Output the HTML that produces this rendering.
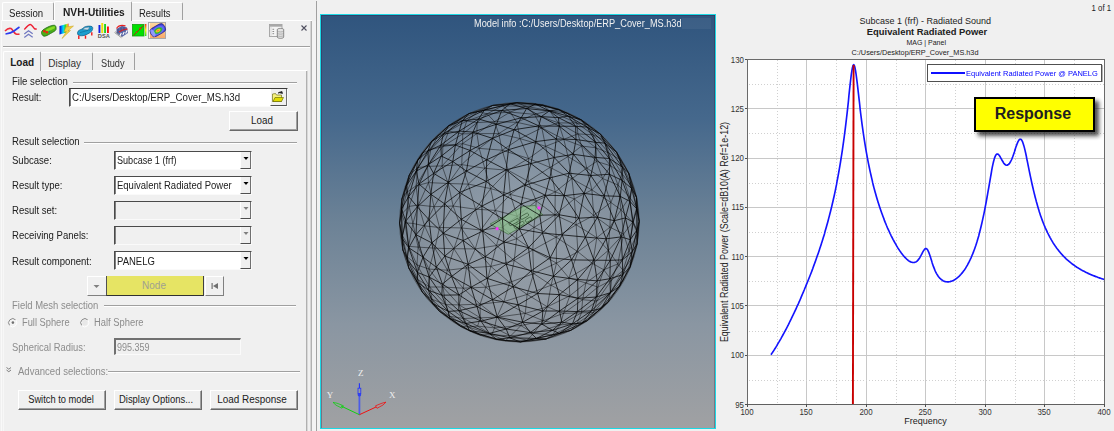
<!DOCTYPE html>
<html><head><meta charset="utf-8"><style>
html,body{margin:0;padding:0;}
body{width:1114px;height:431px;overflow:hidden;background:#f0f0f0;position:relative;font-family:"Liberation Sans", sans-serif;}
.t{position:absolute;white-space:nowrap;line-height:1;font-family:"Liberation Sans", sans-serif;}
.r{position:absolute;}
</style></head><body>
<div class="r" style="left:2px;top:2px;width:52px;height:19px;border-left:1px solid #fff;border-top:1px solid #fff;border-right:1px solid #a0a0a0;box-sizing:border-box;border-top-left-radius:2px;border-top-right-radius:2px;"></div>
<div class="r" style="left:54px;top:1px;width:78px;height:20px;border-left:1px solid #fff;border-top:1px solid #fff;border-right:1px solid #a0a0a0;box-sizing:border-box;background:#f0f0f0;border-top-left-radius:2px;border-top-right-radius:2px;"></div>
<div class="r" style="left:132px;top:2px;width:51px;height:19px;border-top:1px solid #fff;border-right:1px solid #a0a0a0;box-sizing:border-box;border-top-right-radius:2px;"></div>
<div class="t" style="left:9px;top:8.84px;font-size:10px;font-weight:normal;color:#202020;transform:scaleX(0.96);transform-origin:0 0;">Session</div>
<div class="t" style="left:62.6px;top:7.73px;font-size:10px;font-weight:bold;color:#202020;transform:scaleX(1.02);transform-origin:0 0;">NVH-Utilities</div>
<div class="t" style="left:139px;top:9.04px;font-size:10px;font-weight:normal;color:#202020;transform:scaleX(0.944);transform-origin:0 0;">Results</div>
<div class="r" style="left:2px;top:20px;width:52px;height:1px;background:#fff"></div>
<div class="r" style="left:132px;top:20px;width:180px;height:1px;background:#fff"></div>
<div class="r" style="left:1px;top:20px;width:1px;height:411px;background:#f9f9f9"></div>
<div class="r" style="left:310px;top:21px;width:1px;height:410px;background:#d4d4d4"></div>
<div class="r" style="left:311px;top:21px;width:1px;height:410px;background:#b0b0b0"></div>
<div class="r" style="left:312px;top:21px;width:4px;height:410px;background:#f3f3f3"></div>
<div class="r" style="left:316px;top:1px;width:1px;height:430px;background:#a0a0a0"></div>
<div class="r" style="left:317px;top:0px;width:3px;height:431px;background:#f1f1f1"></div>

<svg class="r" style="left:0;top:18px" width="170" height="26" viewBox="0 18 170 26">
 <!-- icon1 -->
 <path d="M5 31 C7 29 9 27.8 11 28.6 C13 29.5 13.5 33 16 34 C17.5 34.6 18.5 34.3 19.5 34" fill="none" stroke="#ee2a3a" stroke-width="1.6"/>
 <path d="M5.5 34 C9 33.5 12 32.5 14 31 C16 29.5 18 28 19.5 27" fill="none" stroke="#2a3aee" stroke-width="1.6"/>
 <!-- icon2 -->
 <path d="M24.3 29.5 C26 27.5 28.5 24.4 30.4 24.4 C32 24.4 33 27.5 34.5 28.6 C35.3 29.2 36 29 36.6 28.6" fill="none" stroke="#ee1c30" stroke-width="1.5"/>
 <path d="M24.3 34 L28.5 30.7 L32.7 33.7 M24.3 37.5 L28.5 34.2 L32.7 37.2" fill="none" stroke="#7078c0" stroke-width="1.2"/>
 <!-- icon3 green board -->
 <path d="M41.5 32.5 C41.5 30.5 44 29 47 27.5 C50 26 52.5 25 54.5 25.3 C56 25.6 56.3 27.5 56 29.5 C55.5 31 53 32 50.5 33.5 C48 35 46 36.3 44 36.2 C42.5 36 41.5 34 41.5 32.5Z" fill="#4caf18" stroke="#1d6a10" stroke-width="0.8"/>
 <path d="M45.5 30 C48 28.5 51 27 54 26.3 C55 26.2 55.3 27.5 54.5 28.5 C52 29.5 49.5 30.8 47.5 31.8Z" fill="#86dc22"/>
 <circle cx="44.3" cy="31.2" r="1.3" fill="#f02010"/><circle cx="46.9" cy="32.2" r="1.2" fill="#f02010"/><circle cx="49.6" cy="31.6" r="0.9" fill="#208080"/>
 <!-- icon4 flag + bolt -->
 <defs>
  <linearGradient id="rb" x1="0" x2="1" y1="0" y2="0"><stop offset="0" stop-color="#0000d0"/><stop offset="0.3" stop-color="#00a0ff"/><stop offset="0.45" stop-color="#00e0e0"/><stop offset="0.65" stop-color="#30d030"/><stop offset="0.85" stop-color="#f0e020"/><stop offset="1" stop-color="#e03010"/></linearGradient>
  <linearGradient id="bars" x1="0" x2="0" y1="0" y2="1"><stop offset="0" stop-color="#ff2020"/><stop offset="0.5" stop-color="#ffff00"/><stop offset="1" stop-color="#20e020"/></linearGradient>
  <linearGradient id="org" x1="0" x2="0" y1="0" y2="1"><stop offset="0" stop-color="#ffd9a0"/><stop offset="1" stop-color="#f8a868"/></linearGradient>
  <radialGradient id="cyl" cx="0.5" cy="0.55" r="0.55"><stop offset="0" stop-color="#ff5050"/><stop offset="0.2" stop-color="#f0c020"/><stop offset="0.4" stop-color="#20c020"/><stop offset="0.65" stop-color="#6868ff"/><stop offset="1" stop-color="#3838d0"/></radialGradient>
 </defs>
 <path d="M59.5 26 L68.5 23.5 L68.5 32 L59.5 34.5Z" fill="url(#rb)"/>
 <path d="M73.5 26 L66 27 L64 32 L66.5 31.5 L62 38.5 L70.5 30.5 L68 30.8Z" fill="#f0d040" stroke="#c8a020" stroke-width="0.5"/>
 <!-- icon5 car -->
 <path d="M77.5 32.5 C77.8 30.8 79.5 29.8 82 29 L84.5 27 C87 26 90 25.8 92 26.6 C93 27.3 93 29 92 30.8 C90.5 32.5 88 34 85 35.2 C82.5 36 79.5 36 78.2 35 C77.6 34.4 77.4 33.5 77.5 32.5Z" fill="#1c9fcf" stroke="#0b5c86" stroke-width="0.7"/>
 <path d="M82.5 29.5 L85 27.6 L89.8 27 L88 30 Z" fill="#cfdde6" stroke="#0b5c86" stroke-width="0.4"/>
 <path d="M80 32.6 L88.5 30.2 M89 30.5 L91.5 28.3" stroke="#0b5c86" stroke-width="0.5"/>
 <path d="M78.8 35.6 L78.8 39 M85.5 35.4 L85.5 38.8 M91.8 32.3 L91.8 35.5" stroke="#f01818" stroke-width="1.4"/>
 <!-- icon6 DSA -->
 <rect x="98.5" y="25" width="1.9" height="8" fill="#1020e0"/>
 <rect x="101.3" y="23" width="1.9" height="10" fill="#f0e000"/>
 <rect x="104.1" y="24" width="1.9" height="9" fill="#20d020"/>
 <rect x="107" y="26.5" width="1.9" height="6.5" fill="#ff1010"/>
 <text x="97.8" y="38.4" font-family="Liberation Sans" font-weight="bold" font-size="5.4" fill="#505050" textLength="12" lengthAdjust="spacingAndGlyphs">DSA</text>
 <!-- icon7 -->
 <path d="M116.5 29 L122 25.8 L127 27.5 L128 33 L122 37 L116.5 33.5Z" fill="#5a68a8"/>
 <path d="M114.5 32.5 L121.5 37.8 M115.2 31.6 L122.2 36.9" stroke="#8a8a8a" stroke-width="0.8"/>
 <path d="M116.5 28.5 C118 26 121.5 24.8 125.5 25.8 M119 32 C121.5 30.2 124.5 29 127.5 29.2" fill="none" stroke="#e82020" stroke-width="1.2"/>
 <path d="M120 35.8 L121.3 33 M122.8 34.8 L124.2 32 M125.6 33.4 L127 30.6" stroke="#ffffff" stroke-width="1.1"/>
 <path d="M118 28.8 L118 33 M121 27.5 L121 31.3 M124 27 L124 30.5" stroke="#404070" stroke-width="0.7"/>
 <!-- icon8 -->
 <rect x="132.5" y="24.5" width="11.5" height="11.5" fill="#00e000" stroke="#10a010" stroke-width="0.8"/>
 <path d="M133.5 35.5 L143.5 25.5" stroke="#a03010" stroke-width="1"/><circle cx="140.3" cy="28.5" r="1.1" fill="#e02020"/><circle cx="136.5" cy="32.3" r="0.8" fill="#e02020"/>
 <rect x="145" y="24" width="1.4" height="12" fill="url(#bars)"/>
 <!-- icon9 selected -->
 <rect x="148.5" y="22.5" width="17" height="16" fill="url(#org)" stroke="#a8a8a8" stroke-width="1"/>
 <path d="M149.5 23 V38" stroke="#fff" stroke-width="0.8"/>
 <g transform="translate(157.8 30.2) rotate(-30)">
  <rect x="-7.8" y="-4.6" width="15.6" height="9.2" rx="3.6" fill="url(#cyl)" stroke="#2a2a80" stroke-width="0.7"/>
  <ellipse cx="-5.6" cy="0" rx="1.8" ry="4" fill="#a0a8ff" fill-opacity="0.8"/>
 </g>
</svg>
<svg class="r" style="left:0;top:0" width="320" height="46" viewBox="0 0 320 46"> <!-- right icons -->
 <rect x="269.5" y="24.5" width="12.5" height="12" fill="#f4f4f4" stroke="#a0a0a0" stroke-width="0.9"/>
 <rect x="269.5" y="24.5" width="12.5" height="2.2" fill="#a8a8a8"/>
 <path d="M271 26.7 V36.5" stroke="#c8c8c8" stroke-width="0.6"/>
 <path d="M272.5 29.3 h1.6 M272.5 31.5 h1.6 M272.5 33.7 h1.6" stroke="#808080" stroke-width="0.9"/>
 <path d="M277.3 29.6 C277.3 28 283.7 28 283.7 29.6 V37 C283.7 38.8 277.3 38.8 277.3 37Z" fill="#e4e4e4" stroke="#707070" stroke-width="0.8"/>
 <path d="M277.3 31.2 C278.5 32.2 282.5 32.2 283.7 31.2 M277.3 33.4 C278.5 34.4 282.5 34.4 283.7 33.4 M277.3 35.6 C278.5 36.6 282.5 36.6 283.7 35.6" fill="none" stroke="#8a8a8a" stroke-width="0.6"/>
 <path d="M301.5 25.5 L306.5 30.5 M306.5 25.5 L301.5 30.5" stroke="#505060" stroke-width="1.1"/>
</svg>
<div class="r" style="left:3px;top:46px;width:307px;height:1px;background:#a0a0a0"></div>
<div class="r" style="left:3px;top:47px;width:307px;height:1px;background:#fff"></div>
<div class="r" style="left:3px;top:51px;width:38px;height:20px;border-left:1px solid #fff;border-top:1px solid #fff;border-right:1px solid #a0a0a0;box-sizing:border-box;background:#f0f0f0;border-top-left-radius:2px;border-top-right-radius:2px;"></div>
<div class="r" style="left:41px;top:52px;width:52px;height:18px;border-top:1px solid #fff;border-right:1px solid #a0a0a0;box-sizing:border-box;border-top-right-radius:2px;"></div>
<div class="r" style="left:93px;top:52px;width:42px;height:18px;border-top:1px solid #fff;border-right:1px solid #a0a0a0;box-sizing:border-box;border-top-right-radius:2px;"></div>
<div class="t" style="left:10.2px;top:57.63px;font-size:10px;font-weight:bold;color:#202020;">Load</div>
<div class="t" style="left:48.2px;top:59.03px;font-size:10px;font-weight:normal;color:#333;">Display</div>
<div class="t" style="left:100.8px;top:59.03px;font-size:10px;font-weight:normal;color:#333;transform:scaleX(0.92);transform-origin:0 0;">Study</div>
<div class="r" style="left:41px;top:70px;width:266px;height:1px;background:#fff"></div>
<div class="r" style="left:3px;top:70px;width:1px;height:361px;background:#f7f7f7"></div>
<div class="r" style="left:306px;top:71px;width:1px;height:360px;background:#b0b0b0"></div>
<div class="r" style="left:307px;top:71px;width:1px;height:360px;background:#d8d8d8"></div>
<div class="t" style="left:11.6px;top:77.03px;font-size:10px;font-weight:normal;color:#202020;transform:scaleX(0.958);transform-origin:0 0;">File selection</div>
<div class="r" style="left:73px;top:82px;width:224px;height:1px;background:#a0a0a0"></div>
<div class="r" style="left:73px;top:83px;width:224px;height:1px;background:#fff"></div>
<div class="t" style="left:11.6px;top:92.94px;font-size:10px;font-weight:normal;color:#202020;transform:scaleX(0.94);transform-origin:0 0;">Result:</div>
<div class="r" style="left:69px;top:88px;width:219px;height:19px;background:#fff;border-top:1px solid #3a3a3a;border-left:1px solid #4a4a4a;box-shadow:inset 1px 0 0 #808080;border-bottom:1px solid #fafafa;border-right:1px solid #fafafa;box-sizing:border-box;"></div>
<div class="t" style="left:72px;top:92.83px;font-size:10px;font-weight:normal;color:#202020;transform:scaleX(0.966);transform-origin:0 0;">C:/Users/Desktop/ERP_Cover_MS.h3d</div>
<div class="r" style="left:270px;top:89px;width:17px;height:17px;background:#f0f0f0;border-left:1px solid #fff;border-right:1px solid #707070;border-bottom:1px solid #505050;box-sizing:border-box;"></div>
<svg class="r" style="left:270px;top:89px" width="17" height="17"><path d="M2.5 5 L5.5 4.5 L6.5 6 L11.5 6 L11.5 12.5 L2.5 12.5Z" fill="#f4f080" stroke="#606000" stroke-width="0.6"/><path d="M3 12.5 L5 8.5 L13.5 8.5 L11.5 12.5Z" fill="#e0dc00" stroke="#606000" stroke-width="0.6"/><path d="M8.5 3.5 L12 2.5 L12.5 4.5Z M10 3.2 L8 4.5" fill="#202020" stroke="#202020" stroke-width="0.7"/></svg>
<div class="r" style="left:229px;top:111px;width:69px;height:20px;background:#f0f0f0;border-left:1px solid #fff;border-top:1px solid #fff;border-right:1px solid #696969;border-bottom:1px solid #696969;box-shadow:inset -1px -1px 0 #a0a0a0;box-sizing:border-box;"></div>
<div class="t" style="left:262.1px;top:116.03px;font-size:10px;font-weight:normal;color:#202020;transform:translateX(-50%) scaleX(0.98);">Load</div>
<div class="t" style="left:11.8px;top:137.44px;font-size:10px;font-weight:normal;color:#202020;transform:scaleX(0.959);transform-origin:0 0;">Result selection</div>
<div class="r" style="left:84px;top:142px;width:213px;height:1px;background:#a0a0a0"></div>
<div class="r" style="left:84px;top:143px;width:213px;height:1px;background:#fff"></div>
<div class="t" style="left:12.3px;top:155.63px;font-size:10px;font-weight:normal;color:#202020;transform:scaleX(0.955);transform-origin:0 0;">Subcase:</div>
<div class="t" style="left:12.3px;top:181.23px;font-size:10px;font-weight:normal;color:#202020;transform:scaleX(0.955);transform-origin:0 0;">Result type:</div>
<div class="t" style="left:12.3px;top:206.03px;font-size:10px;font-weight:normal;color:#202020;transform:scaleX(0.955);transform-origin:0 0;">Result set:</div>
<div class="t" style="left:12.3px;top:231.23px;font-size:10px;font-weight:normal;color:#202020;transform:scaleX(0.955);transform-origin:0 0;">Receiving Panels:</div>
<div class="t" style="left:12.3px;top:256.54px;font-size:10px;font-weight:normal;color:#202020;transform:scaleX(0.955);transform-origin:0 0;">Result component:</div>
<div class="r" style="left:114px;top:151px;width:138px;height:19px;background:#fff;border-top:1px solid #4a4a4a;border-left:1px solid #4a4a4a;box-shadow:inset 1px 0 0 #808080;border-bottom:1px solid #fafafa;border-right:1px solid #fafafa;box-sizing:border-box;"></div>
<div class="r" style="left:240px;top:152px;width:11px;height:17px;background:#f0f0f0;border-left:1px solid #fff;border-right:1px solid #707070;border-bottom:1px solid #505050;box-sizing:border-box;"></div>
<svg class="r" style="left:240px;top:151px" width="11" height="18"><path d="M3.5 6 L8.5 6 L6 9Z" fill="#000"/></svg>
<div class="t" style="left:117px;top:155.63px;font-size:10px;font-weight:normal;color:#202020;transform:scaleX(0.908);transform-origin:0 0;">Subcase 1 (frf)</div>
<div class="r" style="left:114px;top:176px;width:138px;height:19px;background:#fff;border-top:1px solid #4a4a4a;border-left:1px solid #4a4a4a;box-shadow:inset 1px 0 0 #808080;border-bottom:1px solid #fafafa;border-right:1px solid #fafafa;box-sizing:border-box;"></div>
<div class="r" style="left:240px;top:177px;width:11px;height:17px;background:#f0f0f0;border-left:1px solid #fff;border-right:1px solid #707070;border-bottom:1px solid #505050;box-sizing:border-box;"></div>
<svg class="r" style="left:240px;top:176px" width="11" height="18"><path d="M3.5 6 L8.5 6 L6 9Z" fill="#000"/></svg>
<div class="t" style="left:117px;top:181.23px;font-size:10px;font-weight:normal;color:#202020;transform:scaleX(0.95);transform-origin:0 0;">Equivalent Radiated Power</div>
<div class="r" style="left:114px;top:201px;width:138px;height:19px;background:#f0f0f0;border-top:1px solid #4a4a4a;border-left:1px solid #4a4a4a;box-shadow:inset 1px 0 0 #808080;border-bottom:1px solid #fafafa;border-right:1px solid #fafafa;box-sizing:border-box;"></div>
<div class="r" style="left:240px;top:202px;width:11px;height:17px;background:#f0f0f0;border-left:1px solid #fff;border-right:1px solid #707070;border-bottom:1px solid #505050;box-sizing:border-box;"></div>
<svg class="r" style="left:240px;top:201px" width="11" height="18"><path d="M3.5 6 L8.5 6 L6 9Z" fill="#808080"/></svg>
<div class="r" style="left:114px;top:226px;width:138px;height:19px;background:#f0f0f0;border-top:1px solid #4a4a4a;border-left:1px solid #4a4a4a;box-shadow:inset 1px 0 0 #808080;border-bottom:1px solid #fafafa;border-right:1px solid #fafafa;box-sizing:border-box;"></div>
<div class="r" style="left:240px;top:227px;width:11px;height:17px;background:#f0f0f0;border-left:1px solid #fff;border-right:1px solid #707070;border-bottom:1px solid #505050;box-sizing:border-box;"></div>
<svg class="r" style="left:240px;top:226px" width="11" height="18"><path d="M3.5 6 L8.5 6 L6 9Z" fill="#808080"/></svg>
<div class="r" style="left:114px;top:251px;width:138px;height:19px;background:#fff;border-top:1px solid #4a4a4a;border-left:1px solid #4a4a4a;box-shadow:inset 1px 0 0 #808080;border-bottom:1px solid #fafafa;border-right:1px solid #fafafa;box-sizing:border-box;"></div>
<div class="r" style="left:240px;top:252px;width:11px;height:17px;background:#f0f0f0;border-left:1px solid #fff;border-right:1px solid #707070;border-bottom:1px solid #505050;box-sizing:border-box;"></div>
<svg class="r" style="left:240px;top:251px" width="11" height="18"><path d="M3.5 6 L8.5 6 L6 9Z" fill="#000"/></svg>
<div class="t" style="left:117px;top:256.54px;font-size:10px;font-weight:normal;color:#202020;transform:scaleX(0.95);transform-origin:0 0;">PANELG</div>
<div class="r" style="left:87px;top:276px;width:20px;height:20px;background:#f0f0f0;border-left:1px solid #fff;border-top:1px solid #fff;border-right:1px solid #808080;border-bottom:1px solid #808080;box-sizing:border-box;"></div>
<svg class="r" style="left:87px;top:276px" width="20" height="20"><path d="M6.5 9 L12.5 9 L9.5 12Z" fill="#808080"/></svg>
<div class="r" style="left:106px;top:276px;width:98px;height:20px;background:#e6e464;border-left:1px solid #505050;border-right:1px solid #404040;border-bottom:1px solid #303030;box-sizing:border-box;"></div>
<div class="t" style="left:154px;top:281.14px;font-size:10px;font-weight:normal;color:#a0a090;transform:translateX(-50%);">Node</div>
<div class="r" style="left:205px;top:276px;width:19px;height:20px;background:#f0f0f0;border-left:1px solid #fff;border-top:1px solid #fff;border-right:1px solid #808080;border-bottom:1px solid #808080;box-sizing:border-box;"></div>
<svg class="r" style="left:205px;top:276px" width="19" height="20"><rect x="6.5" y="7" width="1.2" height="6" fill="#707070"/><path d="M13 7 L8 10 L13 13Z" fill="#707070"/></svg>
<div class="t" style="left:11.8px;top:301.04px;font-size:10px;font-weight:normal;color:#8c8c8c;transform:scaleX(0.947);transform-origin:0 0;">Field Mesh selection</div>
<div class="r" style="left:104px;top:305px;width:192px;height:1px;background:#a0a0a0"></div>
<div class="r" style="left:104px;top:306px;width:192px;height:1px;background:#fff"></div>
<svg class="r" style="left:0;top:312px" width="100" height="20"><g fill="none" stroke-width="1"><path d="M9.7 13.5 A3.6 3.6 0 0 1 15.7 8" stroke="#8a8a8a"/><path d="M15.7 8 A3.6 3.6 0 0 1 9.7 13.5" stroke="#ffffff"/><path d="M81.8 13.5 A3.6 3.6 0 0 1 87.8 8" stroke="#8a8a8a"/><path d="M87.8 8 A3.6 3.6 0 0 1 81.8 13.5" stroke="#ffffff"/></g><circle cx="12.7" cy="10.7" r="2.6" fill="#f4f4f4"/><circle cx="84.8" cy="10.7" r="2.6" fill="#e8e8e8"/><circle cx="12.9" cy="10.6" r="1.3" fill="#707070"/></svg>
<div class="t" style="left:21.8px;top:318.34px;font-size:10px;font-weight:normal;color:#8c8c8c;transform:scaleX(0.93);transform-origin:0 0;">Full Sphere</div>
<div class="t" style="left:93.8px;top:318.34px;font-size:10px;font-weight:normal;color:#8c8c8c;transform:scaleX(0.937);transform-origin:0 0;">Half Sphere</div>
<div class="t" style="left:12.3px;top:343.24px;font-size:10px;font-weight:normal;color:#8c8c8c;transform:scaleX(0.938);transform-origin:0 0;">Spherical Radius:</div>
<div class="r" style="left:114px;top:338px;width:127px;height:17px;background:#f0f0f0;border-top:2px solid #707070;border-left:2px solid #707070;border-bottom:1px solid #fafafa;border-right:1px solid #fafafa;box-sizing:border-box;"></div>
<div class="t" style="left:116.5px;top:343.04px;font-size:10px;font-weight:normal;color:#8c8c8c;transform:scaleX(0.9);transform-origin:0 0;">995.359</div>
<svg class="r" style="left:4.5px;top:365.5px" width="8" height="8"><path d="M1.5 1.5 L3.8 3.2 L6 1.5 M1.5 4 L3.8 5.7 L6 4" fill="none" stroke="#707070" stroke-width="0.9"/></svg>
<div class="t" style="left:18.2px;top:366.54px;font-size:10px;font-weight:normal;color:#8c8c8c;transform:scaleX(0.955);transform-origin:0 0;">Advanced selections:</div>
<div class="r" style="left:108px;top:371px;width:192px;height:1px;background:#a0a0a0"></div>
<div class="r" style="left:108px;top:372px;width:192px;height:1px;background:#fff"></div>
<div class="r" style="left:18px;top:390px;width:88px;height:20px;background:#f0f0f0;border-left:1px solid #fff;border-top:1px solid #fff;border-right:1px solid #696969;border-bottom:1px solid #696969;box-shadow:inset -1px -1px 0 #a0a0a0;box-sizing:border-box;"></div>
<div class="t" style="left:60.5px;top:394.74px;font-size:10px;font-weight:normal;color:#202020;transform:translateX(-50%) scaleX(0.93);">Switch to model</div>
<div class="r" style="left:114px;top:390px;width:88px;height:20px;background:#f0f0f0;border-left:1px solid #fff;border-top:1px solid #fff;border-right:1px solid #696969;border-bottom:1px solid #696969;box-shadow:inset -1px -1px 0 #a0a0a0;box-sizing:border-box;"></div>
<div class="t" style="left:156.2px;top:394.74px;font-size:10px;font-weight:normal;color:#202020;transform:translateX(-50%) scaleX(0.945);">Display Options...</div>
<div class="r" style="left:210px;top:390px;width:88px;height:20px;background:#f0f0f0;border-left:1px solid #fff;border-top:1px solid #fff;border-right:1px solid #696969;border-bottom:1px solid #696969;box-shadow:inset -1px -1px 0 #a0a0a0;box-sizing:border-box;"></div>
<div class="t" style="left:252.2px;top:394.74px;font-size:10px;font-weight:normal;color:#202020;transform:translateX(-50%) scaleX(0.99);">Load Response</div>
<div class="r" style="left:320px;top:14px;width:396px;height:415px;box-sizing:border-box;border:1px solid #1cd8e4;background:#40527a">
<div style="position:absolute;left:0;top:0;right:0;bottom:0;background:linear-gradient(#30557e 0%,#45688c 25%,#6c8296 50%,#8a96a2 75%,#a0a1a3 100%);box-shadow:inset 1px 1px 0 rgba(50,30,70,0.35),inset -1px 0 0 rgba(60,20,50,0.3)"></div>
<div style="position:absolute;left:361px;top:3px;width:29px;height:11px;background:rgba(255,255,255,0.055)"></div>
<svg style="position:absolute;left:0;top:0" width="396" height="415">
 <defs><radialGradient id="sph" cx="0.5" cy="0.45" r="0.62"><stop offset="0" stop-color="#b0b4b8" stop-opacity="0.6"/><stop offset="0.6" stop-color="#9ca0a6" stop-opacity="0.55"/><stop offset="1" stop-color="#7c828a" stop-opacity="0.5"/></radialGradient></defs>
 <circle cx="198.4" cy="207.2" r="120" fill="url(#sph)"/>
 <path d="M147.3 169.1L132.1 191.0M169.8 251.4L188.7 267.4M159.7 215.0L175.4 230.5M145.7 106.0L141.7 118.9M141.7 118.9L141.6 128.6M206.1 279.4L226.3 291.8M139.3 311.1L118.4 296.2M204.4 91.2L189.1 97.1M233.9 199.9L235.2 222.1M121.9 131.5L121.1 150.9M299.1 144.6L307.7 158.1M222.2 305.7L239.1 309.9M164.8 272.2L182.9 286.6M222.2 305.7L204.3 298.4M181.2 135.2L187.2 155.3M272.1 119.8L266.3 109.6M234.3 176.9L229.0 152.4M106.5 151.4L121.9 131.5M189.6 320.9L199.9 310.6M253.3 183.9L233.9 199.9M315.7 192.5L311.6 207.2M158.2 133.4L141.6 128.6M174.3 195.4L196.1 201.1M226.3 291.8L248.8 280.8M121.9 131.5L141.7 118.9M206.1 325.3L212.6 318.3M275.6 146.4L265.8 153.1M283.4 125.2L299.1 144.6M272.7 200.4L288.9 212.2M169.8 251.4L164.8 272.2M264.9 268.0L271.7 248.6M301.9 265.4L289.4 277.6M229.0 152.4L247.0 141.6M246.1 98.1L237.9 94.5M124.9 289.6L138.2 289.9M275.0 132.8L260.6 131.0M163.8 153.3L187.2 155.3M164.8 272.2L159.1 289.1M288.9 212.2L275.8 222.7M132.9 233.7L154.3 233.9M156.6 311.1L147.2 311.9M288.9 212.2L302.6 219.0M272.1 119.8L256.9 118.9M289.4 277.6L302.1 255.4M298.7 271.2L301.9 265.4M80.9 184.0L88.3 160.1M228.3 95.7L213.4 99.3M106.5 151.4L96.7 152.6M275.8 222.7L256.9 236.8M253.3 183.9L255.2 209.8M312.0 242.0L308.1 236.0M83.9 207.9L91.9 208.4M158.2 133.4L155.9 118.6M184.6 325.6L159.1 319.9M318.2 206.4L316.5 218.6M309.1 252.0L312.0 242.0M182.9 286.6L175.8 302.2M121.9 131.5L109.9 134.5M242.5 298.4L248.8 280.8M287.3 235.4L296.8 248.9M199.0 123.6L224.6 131.3M295.6 137.2L299.1 144.6M213.4 99.3L204.4 91.2M255.8 108.0L228.3 95.7M145.7 106.0L156.5 96.6M169.8 251.4L193.2 245.5M315.5 182.3L311.5 172.3M220.8 112.9L199.0 123.6M206.1 279.4L230.1 270.2M289.9 187.5L300.0 194.8M207.6 143.5L229.0 152.4M287.2 287.1L272.3 297.6M246.1 98.1L222.0 90.1M230.1 270.2L247.9 262.9M311.5 172.3L300.9 158.5M159.7 215.0L154.3 233.9M181.5 90.9L204.4 91.2M163.8 153.3L147.3 169.1M164.8 272.2L145.4 253.0M289.7 150.8L287.9 138.0M97.1 232.1L108.0 254.1M237.5 107.9L220.8 112.9M132.1 191.0L127.2 168.5M158.2 133.4L140.7 149.6M182.9 286.6L204.3 298.4M154.5 194.2L140.2 212.9M156.6 311.1L159.3 302.8M142.2 273.2L145.4 253.0M103.6 210.9L91.9 208.4M283.4 125.2L295.6 137.2M140.2 212.9L132.9 233.7M86.0 241.7L87.8 253.0M145.7 106.0L138.3 104.9M316.5 218.6L311.6 207.2M315.5 182.3L315.7 192.5M212.7 258.6L235.5 248.1M199.3 326.9L206.1 325.3M132.9 233.7L145.4 253.0M300.9 158.5L299.1 144.6M220.8 112.9L213.4 99.3M256.0 308.5L260.5 297.8M242.5 298.4L261.6 284.7M287.3 235.4L302.6 219.0M302.1 255.4L308.1 236.0M255.8 108.0L237.5 107.9M96.7 264.4L101.4 277.2M234.3 176.9L233.9 199.9M138.2 289.9L142.2 273.2M140.2 212.9L132.1 191.0M316.1 228.9L316.5 218.6M230.1 270.2L226.3 291.8M215.3 186.0L213.0 212.4M127.8 116.0L116.8 120.7M265.8 153.1L247.0 141.6M81.9 235.1L81.4 220.5M275.8 286.0L260.5 297.8M177.7 118.6L199.0 123.6M103.6 210.9L97.1 232.1M147.2 311.9L128.6 301.3M270.9 174.9L289.9 187.5M116.8 120.7L110.6 126.4M156.6 311.1L173.5 312.9M287.3 235.4L282.8 254.8M103.6 210.9L97.4 190.0M166.1 98.8L173.5 106.6M234.3 176.9L215.3 186.0M118.4 296.2L101.4 277.2M220.8 112.9L224.6 131.3M159.1 289.1L175.8 302.2M101.4 277.2L87.8 253.0M96.0 249.9L108.0 254.1M87.6 231.3L86.0 241.7M235.5 248.1L235.2 222.1M121.9 272.0L126.4 255.2M81.9 235.1L78.6 208.1M247.9 262.9L271.7 248.6M121.1 150.9L107.5 167.6M147.2 311.9L139.3 311.1M156.6 311.1L170.8 319.7M272.3 297.6L256.0 308.5M199.0 123.6L207.6 143.5M188.7 267.4L212.7 258.6M266.2 305.7L287.2 287.1M80.7 198.9L85.5 177.5M289.9 187.5L272.7 200.4M234.3 176.9L253.3 183.9M184.6 325.6L189.6 320.9M231.4 319.9L239.1 309.9M159.1 289.1L159.3 302.8M275.8 286.0L276.9 272.1M279.5 119.2L283.4 125.2M260.2 104.8L246.1 98.1M275.0 132.8L289.7 150.8M287.3 235.4L271.7 248.6M225.0 324.0L249.9 315.3M195.9 107.3L173.5 106.6M174.3 195.4L189.3 179.4M242.8 124.3L247.0 141.6M141.6 128.6L121.1 150.9M156.1 107.6L145.7 106.0M250.9 163.7L270.9 174.9M109.9 134.5L101.5 137.9M255.2 209.8L275.8 222.7M166.1 98.8L156.5 96.6M212.7 258.6L206.1 279.4M159.1 289.1L182.9 286.6M169.8 251.4L154.3 233.9M96.0 249.9L97.1 232.1M193.2 245.5L211.8 235.0M235.2 222.1L256.9 236.8M247.9 262.9L264.9 268.0M311.5 172.3L307.7 158.1M272.3 297.6L275.8 286.0M311.6 207.2L308.1 236.0M266.3 109.6L255.8 108.0M127.6 110.8L116.8 120.7M139.3 311.1L159.1 319.9M276.9 272.1L264.9 268.0M156.1 107.6L166.1 98.8M300.0 194.8L302.6 219.0M140.7 149.6L127.2 168.5M272.1 119.8L287.9 138.0M195.9 87.6L222.0 90.1M142.9 303.5L128.6 301.3M242.8 124.3L237.5 107.9M166.1 98.8L181.5 90.9M88.3 160.1L101.5 137.9M138.3 104.9L127.6 110.8M275.8 286.0L290.5 265.2M101.5 137.9L116.8 120.7M155.9 118.6L177.7 118.6M141.7 118.9L127.8 116.0M235.5 248.1L256.9 236.8M159.7 215.0L154.5 194.2M156.5 96.6L171.7 90.4M308.6 182.2L300.0 194.8M211.8 235.0L212.7 258.6M225.0 324.0L231.4 319.9M141.7 118.9L155.9 118.6M195.9 107.3L189.1 97.1M300.9 158.5L289.7 150.8M207.2 166.3L229.0 152.4M142.9 303.5L124.9 289.6M83.9 207.9L81.4 220.5M312.0 242.0L302.1 255.4M95.1 170.8L107.5 167.6M290.5 265.2L296.8 248.9M108.0 254.1L121.9 272.0M127.2 168.5L121.1 150.9M247.9 262.9L248.8 280.8M287.9 138.0L299.1 144.6M222.0 90.1L204.4 91.2M156.5 96.6L147.9 98.6M187.2 155.3L207.2 166.3M311.6 207.2L300.0 194.8M111.1 284.3L96.7 264.4M233.9 199.9L255.2 209.8M212.6 318.3L231.4 319.9M272.1 119.8L283.4 125.2M300.9 158.5L297.0 170.0M145.4 253.0L154.3 233.9M164.8 272.2L188.7 267.4M156.6 311.1L142.9 303.5M204.3 298.4L226.3 291.8M260.6 131.0L247.0 141.6M235.5 248.1L247.9 262.9M315.7 192.5L316.5 218.6M159.1 289.1L138.2 289.9M308.6 182.2L311.6 207.2M155.9 118.6L141.6 128.6M113.9 233.2L132.9 233.7M113.0 191.7L97.4 190.0M83.9 207.9L80.7 198.9M124.9 289.6L121.9 272.0M118.6 212.5L113.9 233.2M126.4 255.2L145.4 253.0M163.8 153.3L181.2 135.2M195.9 87.6L204.4 91.2M311.5 172.3L308.6 182.2M88.1 191.4L85.5 177.5M222.2 305.7L226.3 291.8M181.2 135.2L207.6 143.5M196.1 201.1L213.0 212.4M147.2 311.9L159.1 319.9M253.3 183.9L272.7 200.4M80.9 184.0L78.6 208.1M184.6 325.6L175.5 324.4M142.9 303.5L159.3 302.8M309.1 252.0L301.9 265.4M239.1 309.9L260.5 297.8M88.1 191.4L91.9 208.4M276.9 272.1L261.6 284.7M187.2 155.3L207.6 143.5M316.1 228.9L312.0 242.0M207.6 143.5L224.6 131.3M83.9 207.9L88.1 191.4M246.1 98.1L228.3 95.7M174.3 195.4L154.5 194.2M290.5 265.2L282.8 254.8M234.3 176.9L207.2 166.3M118.6 212.5L103.6 210.9M260.5 297.8L261.6 284.7M260.6 131.0L256.9 118.9M182.9 286.6L206.1 279.4M128.6 301.3L111.1 284.3M173.5 106.6L177.7 118.6M272.7 200.4L255.2 209.8M81.9 235.1L86.0 241.7M199.9 310.6L212.6 318.3M113.0 191.7L103.6 210.9M249.9 315.3L256.0 308.5M175.8 302.2L204.3 298.4M301.9 265.4L312.0 242.0M199.9 310.6L175.8 302.2M97.4 190.0L91.9 208.4M174.3 195.4L169.7 173.6M215.3 186.0L196.1 201.1M222.2 305.7L242.5 298.4M311.5 172.3L315.7 192.5M181.2 212.4L159.7 215.0M195.6 223.7L193.2 245.5M288.9 212.2L300.0 194.8M181.2 135.2L199.0 123.6M108.7 272.0L96.7 264.4M228.3 95.7L222.0 90.1M103.6 210.9L113.9 233.2M97.1 232.1L113.9 233.2M271.7 248.6L282.8 254.8M132.1 191.0L113.0 191.7M181.5 90.9L171.7 90.4M242.5 298.4L260.5 297.8M159.1 289.1L142.2 273.2M242.5 298.4L226.3 291.8M128.6 301.3L118.4 296.2M81.9 235.1L87.8 253.0M147.3 169.1L140.7 149.6M260.6 131.0L265.8 153.1M80.7 198.9L81.4 220.5M207.6 143.5L207.2 166.3M206.1 279.4L204.3 298.4M199.9 310.6L204.3 298.4M287.2 287.1L301.9 265.4M85.5 177.5L96.7 152.6M215.3 186.0L233.9 199.9M181.2 212.4L174.3 195.4M288.9 212.2L287.3 235.4M108.7 272.0L96.0 249.9M289.4 277.6L290.5 265.2M164.8 272.2L142.2 273.2M250.9 163.7L247.0 141.6M189.6 320.9L206.1 325.3M87.6 231.3L91.9 208.4M237.5 107.9L228.3 95.7M181.5 90.9L195.9 87.6M283.4 125.2L287.9 138.0M290.5 265.2L276.9 272.1M166.1 98.8L189.1 97.1M213.4 99.3L189.1 97.1M80.7 198.9L80.9 184.0M106.5 151.4L121.1 150.9M266.2 305.7L249.9 315.3M80.7 198.9L78.6 208.1M140.2 212.9L118.6 212.5M85.5 177.5L88.3 160.1M181.5 90.9L189.1 97.1M159.3 302.8L175.8 302.2M312.0 242.0L316.5 218.6M181.5 90.9L156.5 96.6M318.2 206.4L315.7 192.5M81.4 220.5L78.6 208.1M128.6 301.3L139.3 311.1M142.9 303.5L138.2 289.9M199.9 310.6L222.2 305.7M264.9 268.0L282.8 254.8M316.5 218.6L308.1 236.0M289.9 187.5L297.0 170.0M121.9 131.5L141.6 128.6M308.1 236.0L296.8 248.9M275.0 132.8L256.9 118.9M87.6 231.3L97.1 232.1M124.9 289.6L111.1 284.3M220.8 112.9L195.9 107.3M289.4 277.6L275.8 286.0M173.5 312.9L175.8 302.2M250.9 163.7L229.0 152.4M213.0 212.4L235.2 222.1M181.2 212.4L196.1 201.1M211.8 235.0L213.0 212.4M154.5 194.2L147.3 169.1M266.2 305.7L272.3 297.6M213.4 99.3L195.9 107.3M261.6 284.7L264.9 268.0M302.1 255.4L296.8 248.9M289.9 187.5L288.9 212.2M189.1 97.1L173.5 106.6M169.7 173.6L189.3 179.4M166.1 98.8L145.7 106.0M287.2 287.1L289.4 277.6M275.0 132.8L272.1 119.8M85.5 177.5L80.9 184.0M224.6 131.3L247.0 141.6M124.9 289.6L108.7 272.0M230.1 270.2L248.8 280.8M169.8 251.4L145.4 253.0M275.6 146.4L260.6 131.0M300.9 158.5L287.9 138.0M173.5 312.9L189.6 320.9M163.8 153.3L140.7 149.6M173.5 312.9L159.3 302.8M247.9 262.9L256.9 236.8M297.0 170.0L300.0 194.8M159.7 215.0L140.2 212.9M121.9 272.0L138.2 289.9M237.5 107.9L213.4 99.3M95.1 170.8L96.7 152.6M248.8 280.8L264.9 268.0M211.8 235.0L235.2 222.1M154.5 194.2L132.1 191.0M255.8 108.0L246.1 98.1M96.7 264.4L86.0 241.7M106.5 151.4L107.5 167.6M142.9 303.5L147.2 311.9M266.2 305.7L256.0 308.5M108.7 272.0L121.9 272.0M231.4 319.9L249.9 315.3M175.4 230.5L193.2 245.5M212.7 258.6L230.1 270.2M308.1 236.0L302.6 219.0M124.9 289.6L128.6 301.3M275.6 146.4L275.0 132.8M83.9 207.9L87.6 231.3M163.8 153.3L158.2 133.4M173.5 312.9L199.9 310.6M281.6 163.5L270.9 174.9M177.7 118.6L181.2 135.2M266.3 109.6L283.4 125.2M281.6 163.5L289.7 150.8M189.3 179.4L207.2 166.3M196.1 201.1L189.3 179.4M95.1 170.8L106.5 151.4M181.2 212.4L195.6 223.7M270.9 174.9L253.3 183.9M272.3 297.6L260.5 297.8M111.1 284.3L101.4 277.2M242.8 124.3L224.6 131.3M147.2 311.9L170.8 319.7M261.6 284.7L248.8 280.8M96.7 264.4L87.8 253.0M256.9 118.9L255.8 108.0M169.7 173.6L187.2 155.3M175.4 230.5L169.8 251.4M242.8 124.3L220.8 112.9M255.2 209.8L235.2 222.1M224.6 131.3L229.0 152.4M215.3 186.0L189.3 179.4M311.5 172.3L299.1 144.6M281.6 163.5L289.9 187.5M156.1 107.6L155.9 118.6M101.5 137.9L110.6 126.4M275.8 286.0L261.6 284.7M281.6 163.5L297.0 170.0M272.3 297.6L289.4 277.6M181.2 212.4L175.4 230.5M95.1 170.8L85.5 177.5M156.5 96.6L138.3 104.9M156.1 107.6L173.5 106.6M211.8 235.0L235.5 248.1M270.9 174.9L272.7 200.4M188.7 267.4L182.9 286.6M155.9 118.6L173.5 106.6M171.7 90.4L147.9 98.6M300.9 158.5L308.6 182.2M256.9 118.9L237.5 107.9M156.1 107.6L141.7 118.9M108.7 272.0L108.0 254.1M88.1 191.4L95.1 170.8M175.4 230.5L195.6 223.7M289.7 150.8L297.0 170.0M195.6 223.7L213.0 212.4M169.7 173.6L147.3 169.1M108.0 254.1L126.4 255.2M127.2 168.5L107.5 167.6M138.3 104.9L127.8 116.0M195.9 107.3L177.7 118.6M266.3 109.6L279.5 119.2M121.9 272.0L142.2 273.2M159.3 302.8L138.2 289.9M282.8 254.8L296.8 248.9M111.1 284.3L118.4 296.2M170.8 319.7L189.6 320.9M96.7 152.6L109.9 134.5M188.7 267.4L206.1 279.4M212.6 318.3L239.1 309.9M126.4 255.2L132.9 233.7M107.5 167.6L97.4 190.0M276.9 272.1L282.8 254.8M184.6 325.6L206.1 325.3M109.9 134.5L127.8 116.0M88.1 191.4L80.7 198.9M231.4 319.9L256.0 308.5M195.6 223.7L196.1 201.1M169.7 173.6L163.8 153.3M158.2 133.4L181.2 135.2M193.2 245.5L188.7 267.4M138.3 104.9L116.8 120.7M96.0 249.9L86.0 241.7M256.9 236.8L271.7 248.6M195.9 107.3L199.0 123.6M260.6 131.0L242.8 124.3M239.1 309.9L242.5 298.4M88.1 191.4L97.4 190.0M91.9 208.4L97.1 232.1M170.8 319.7L184.6 325.6M96.7 152.6L101.5 137.9M265.8 153.1L270.9 174.9M118.6 212.5L132.9 233.7M140.7 149.6L141.6 128.6M174.3 195.4L159.7 215.0M256.9 118.9L242.8 124.3M184.6 325.6L199.3 326.9M95.1 170.8L97.4 190.0M109.9 134.5L116.8 120.7M195.6 223.7L211.8 235.0M250.9 163.7L253.3 183.9M255.2 209.8L256.9 236.8M175.5 324.4L159.1 319.9M169.7 173.6L154.5 194.2M108.0 254.1L113.9 233.2M138.3 104.9L147.9 98.6M127.2 168.5L113.0 191.7M275.8 222.7L271.7 248.6M195.9 87.6L171.7 90.4M235.5 248.1L230.1 270.2M193.2 245.5L212.7 258.6M315.7 192.5L308.6 182.2M96.0 249.9L87.6 231.3M215.3 186.0L207.2 166.3M206.1 325.3L225.0 324.0M308.6 182.2L297.0 170.0M113.9 233.2L126.4 255.2M113.0 191.7L107.5 167.6M311.6 207.2L302.6 219.0M266.3 109.6L246.1 98.1M147.3 169.1L127.2 168.5M275.6 146.4L289.7 150.8M275.0 132.8L287.9 138.0M170.8 319.7L173.5 312.9M265.8 153.1L250.9 163.7M212.6 318.3L222.2 305.7M81.4 220.5L86.0 241.7M126.4 255.2L142.2 273.2M140.7 149.6L121.1 150.9M250.9 163.7L234.3 176.9M302.6 219.0L296.8 248.9M108.7 272.0L111.1 284.3M158.2 133.4L177.7 118.6M189.6 320.9L212.6 318.3M132.1 191.0L118.6 212.5M175.4 230.5L154.3 233.9M96.0 249.9L96.7 264.4M239.1 309.9L256.0 308.5M206.1 325.3L231.4 319.9M272.7 200.4L275.8 222.7M140.2 212.9L154.3 233.9M266.3 109.6L260.2 104.8M187.2 155.3L189.3 179.4M233.9 199.9L213.0 212.4M301.9 265.4L302.1 255.4M81.4 220.5L87.6 231.3M96.7 152.6L88.3 160.1M145.7 106.0L127.8 116.0M265.8 153.1L281.6 163.5M170.8 319.7L159.1 319.9M118.6 212.5L113.0 191.7M272.1 119.8L255.8 108.0M228.3 95.7L204.4 91.2M106.5 151.4L109.9 134.5M275.8 222.7L287.3 235.4M302.1 255.4L290.5 265.2M121.9 131.5L127.8 116.0M275.6 146.4L281.6 163.5" stroke="#000" stroke-width="0.7" stroke-opacity="0.65" fill="none"/>
 <path d="M169.2 209 L202.1 191.4 L214.2 190.5 L221.6 199.8 L187.3 219.3 L179.8 215.1Z" fill="#8cc08c" fill-opacity="0.7" stroke="#406a40" stroke-width="0.7"/>
 <g transform="translate(197 207) rotate(-29)" fill="none" stroke="#3a5a3a" stroke-width="0.7">
  <rect x="-9" y="-3.5" width="11" height="3.2" rx="1.6"/><rect x="4" y="-3.5" width="9" height="3.2" rx="1.6"/>
  <rect x="-6" y="1.5" width="11" height="3.2" rx="1.6"/><rect x="7" y="1.5" width="7" height="3.2" rx="1.6"/>
 </g>
 <circle cx="217.9" cy="192.8" r="1.6" fill="#ff30ff"/><circle cx="176.1" cy="213.7" r="1.6" fill="#ff30ff"/>
 <path d="M122.3 119.3L138.3 116.1M220.9 309.1L209.3 317.6M304.4 202.9L299.3 181.4M147.1 249.3L150.1 272.2M288.5 159.3L274.1 142.4M181.4 203.6L161.7 216.1M193.1 114.7L187.5 134.7M164.3 241.7L166.0 263.3M95.0 219.7L84.8 206.1M96.4 257.4L87.8 232.8M187.5 134.7L185.1 154.8M224.2 180.2L204.3 170.2M171.6 123.4L149.1 135.5M238.5 296.0L221.8 296.0M160.9 191.1L140.3 204.3M309.1 252.0L316.1 228.9M270.4 295.8L261.2 308.1M115.3 252.2L108.2 262.1M274.1 142.4L274.9 127.4M312.2 207.2L304.4 202.9M293.3 205.7L300.1 221.9M273.0 245.2L289.3 245.3M127.3 296.4L107.4 275.2M140.3 204.3L122.2 218.4M149.1 135.5L134.4 130.0M304.4 202.9L293.3 205.7M95.3 156.1L87.6 181.5M228.4 95.9L237.9 94.5M309.3 224.7L300.1 221.9M199.3 326.9L225.0 324.0M119.9 130.1L107.6 149.4M192.2 271.8L166.0 263.3M137.9 279.9L150.1 272.2M215.5 323.4L238.4 318.4M264.4 222.1L250.5 244.9M87.8 253.0L96.1 266.8M185.2 314.0L209.3 317.6M238.5 296.0L238.4 279.6M131.8 146.5L149.1 135.5M164.3 241.7L142.2 225.5M145.4 156.1L127.4 167.2M235.2 124.0L255.0 124.5M160.9 191.1L138.6 177.5M283.2 180.8L263.1 178.4M301.4 244.9L311.2 236.7M95.3 156.1L107.6 149.4M205.6 93.5L180.7 95.5M304.4 202.9L308.9 186.4M228.4 95.9L247.3 101.2M199.3 326.9L215.5 323.4M112.6 158.4L98.0 169.1M96.4 257.4L102.0 242.1M215.5 323.4L231.5 315.3M304.4 202.9L309.3 224.7M279.5 119.2L283.8 128.1M210.4 255.7L207.5 232.7M293.3 205.7L285.2 223.8M121.4 269.1L120.8 280.2M283.2 180.8L269.8 160.5M301.4 244.9L309.3 224.7M237.4 102.6L220.2 101.6M301.1 165.4L288.4 143.5M168.3 318.4L175.5 324.4M189.1 88.8L163.4 95.1M238.3 111.2L217.8 110.9M316.1 228.9L318.2 206.4M193.1 114.7L171.6 123.4M164.3 241.7L185.2 249.2M299.3 181.4L283.2 180.8M119.9 130.1L106.9 136.1M301.4 244.9L289.3 245.3M182.9 226.9L181.4 203.6M288.9 263.7L301.7 259.7M80.5 194.1L87.6 181.5M298.7 271.2L287.2 287.1M207.5 232.7L221.4 218.1M164.3 241.7L161.7 216.1M218.8 200.2L238.3 199.8M160.9 191.1L165.3 166.4M96.3 191.8L98.0 169.1M175.5 109.2L180.7 95.5M240.8 307.2L238.5 296.0M238.4 279.6L256.7 264.5M237.4 102.6L238.3 111.2M176.3 302.1L185.2 314.0M95.3 156.1L106.9 136.1M220.9 309.1L221.8 296.0M216.6 278.5L210.4 255.7M232.5 261.3L250.5 244.9M238.3 111.2L235.2 124.0M81.0 223.2L80.5 194.1M311.2 236.7L316.1 228.9M147.9 98.6L163.4 95.1M120.3 141.1L119.9 130.1M288.4 143.5L274.1 142.4M299.3 181.4L288.5 159.3M200.2 102.8L175.5 109.2M182.9 226.9L164.3 241.7M260.2 104.8L279.5 119.2M142.2 225.5L122.2 218.4M288.9 263.7L301.4 244.9M101.5 137.9L96.7 145.2M163.4 95.1L180.7 95.5M228.4 95.9L205.6 93.5M164.3 241.7L147.1 249.3M260.2 104.8L237.9 94.5M217.8 110.9L214.7 126.6M215.5 323.4L209.3 317.6M210.4 255.7L229.2 242.7M240.8 307.2L220.9 309.1M214.7 126.6L209.9 148.6M138.3 116.1L119.9 130.1M168.3 318.4L148.7 315.7M86.1 244.4L87.8 253.0M220.9 309.1L201.7 307.2M311.2 236.7L315.9 215.0M112.6 158.4L107.6 149.4M84.8 206.1L80.5 194.1M188.7 322.8L175.5 324.4M241.2 219.9L264.4 222.1M254.6 111.3L247.3 101.2M308.9 186.4L315.9 194.0M142.2 225.5L123.8 241.1M288.9 263.7L289.4 277.7M229.2 242.7L241.2 219.9M220.9 309.1L231.5 315.3M264.4 222.1L285.2 223.8M199.3 326.9L188.7 322.8M260.2 104.8L247.3 101.2M127.6 110.8L122.3 119.3M175.5 109.2L171.6 123.4M217.8 110.9L193.1 114.7M160.0 306.1L168.3 318.4M224.2 180.2L243.1 180.7M197.2 289.8L171.5 284.7M120.8 280.2L137.8 295.7M141.2 105.9L138.3 116.1M161.7 216.1L140.3 204.3M315.9 194.0L318.2 206.4M176.3 302.1L160.0 306.1M251.4 308.9L238.4 318.4M256.7 264.5L276.2 265.8M182.9 226.9L207.5 232.7M128.5 303.3L148.7 315.7M81.0 223.2L84.8 206.1M311.2 236.7L309.1 252.0M276.2 265.8L256.9 283.3M312.2 207.2L315.9 215.0M266.1 112.1L279.5 119.2M299.3 181.4L301.1 165.4M288.4 143.5L301.4 152.1M127.4 167.2L131.8 146.5M238.3 199.8L221.4 218.1M275.2 282.0L270.4 295.8M229.2 242.7L250.5 244.9M109.8 179.3L112.6 158.4M315.9 215.0L318.2 206.4M300.1 221.9L289.3 245.3M224.2 180.2L238.3 199.8M293.3 205.7L283.2 180.8M111.9 288.6L107.4 275.2M301.4 152.1L310.5 173.3M197.2 289.8L192.2 271.8M130.5 261.5L115.3 252.2M161.7 216.1L142.2 225.5M152.0 117.1L138.3 116.1M238.4 279.6L232.5 261.3M250.5 244.9L256.7 264.5M276.6 202.1L263.1 178.4M168.3 318.4L188.7 322.8M301.7 259.7L298.7 271.2M221.8 296.0L197.2 289.8M123.6 188.8L109.8 179.3M237.4 102.6L254.6 111.3M307.7 158.1L310.5 173.3M252.4 139.3L255.0 124.5M81.9 235.1L81.0 223.2M96.4 257.4L96.1 266.8M122.2 218.4L110.8 227.9M315.9 215.0L315.9 194.0M160.0 306.1L144.7 308.5M274.9 127.4L254.6 111.3M293.3 205.7L276.6 202.1M288.9 263.7L276.2 265.8M141.2 105.9L122.3 119.3M161.7 216.1L160.9 191.1M276.6 202.1L257.9 203.2M283.8 128.1L301.4 152.1M301.1 165.4L310.5 173.3M137.9 279.9L137.8 295.7M118.4 296.2L111.9 288.6M235.2 124.0L214.7 126.6M240.8 307.2L251.4 308.9M269.8 160.5L252.4 139.3M128.5 303.3L127.3 296.4M107.6 149.4L98.0 169.1M232.5 261.3L210.4 255.7M257.9 203.2L241.2 219.9M221.8 296.0L216.6 278.5M147.1 249.3L123.8 241.1M127.4 167.2L109.8 179.3M233.2 142.5L209.9 148.6M130.5 261.5L150.1 272.2M108.0 204.7L95.0 219.7M263.1 178.4L243.1 180.7M144.7 308.5L168.3 318.4M220.2 101.6L200.2 102.8M86.1 244.4L87.8 232.8M309.3 224.7L315.9 215.0M122.2 218.4L108.0 204.7M85.1 171.2L80.5 194.1M111.9 288.6L127.3 296.4M293.3 205.7L299.3 181.4M301.4 152.1L307.7 158.1M130.5 261.5L123.8 241.1M171.7 90.4L189.1 88.8M107.4 275.2L120.8 280.2M147.1 249.3L166.0 263.3M106.9 136.1L107.6 149.4M181.4 203.6L182.7 180.0M138.6 177.5L145.4 156.1M240.8 307.2L256.4 296.6M235.2 124.0L233.2 142.5M214.3 89.1L237.9 94.5M123.6 188.8L127.4 167.2M233.2 142.5L228.8 162.9M130.5 261.5L137.9 279.9M261.2 308.1L238.4 318.4M263.1 178.4L248.1 158.2M85.1 171.2L95.3 156.1M127.6 110.8L141.2 105.9M108.2 262.1L120.8 280.2M140.3 204.3L123.6 188.8M130.5 261.5L121.4 269.1M96.7 145.2L106.9 136.1M109.8 179.3L98.0 169.1M288.5 159.3L288.4 143.5M87.8 232.8L81.0 223.2M201.7 307.2L209.3 317.6M235.2 124.0L217.8 110.9M269.8 160.5L274.1 142.4M231.5 315.3L238.4 318.4M147.1 249.3L142.2 225.5M171.6 123.4L152.0 117.1M261.2 308.1L280.1 293.5M137.9 279.9L120.8 280.2M285.2 223.8L300.1 221.9M274.1 142.4L252.4 139.3M165.7 144.8L149.1 135.5M145.4 156.1L165.7 144.8M309.3 224.7L311.2 236.7M200.1 189.0L204.3 170.2M122.3 119.3L106.9 136.1M139.3 311.1L128.5 303.3M176.3 302.1L171.5 284.7M123.8 241.1L110.8 227.9M215.5 323.4L225.0 324.0M187.5 134.7L165.7 144.8M147.1 249.3L130.5 261.5M261.2 308.1L266.2 305.7M185.2 249.2L207.5 232.7M308.9 186.4L310.5 173.3M209.9 148.6L204.3 170.2M218.8 200.2L221.4 218.1M108.2 262.1L107.4 275.2M301.4 244.9L301.7 259.7M256.4 296.6L256.9 283.3M140.3 204.3L138.6 177.5M200.1 189.0L224.2 180.2M165.3 166.4L185.1 154.8M148.7 315.7L159.1 319.9M176.3 302.1L156.0 291.6M123.8 241.1L115.3 252.2M201.7 307.2L197.2 289.8M192.2 271.8L185.2 249.2M237.9 94.5L222.0 90.1M128.5 303.3L111.9 288.6M80.9 184.0L85.1 171.2M171.6 123.4L165.7 144.8M121.4 269.1L108.2 262.1M195.9 87.6L189.1 88.8M185.2 314.0L188.7 322.8M237.4 102.6L247.3 101.2M283.2 180.8L288.5 159.3M209.9 148.6L185.1 154.8M233.2 142.5L248.1 158.2M102.0 242.1L87.8 232.8M165.3 166.4L138.6 177.5M78.6 208.1L80.5 194.1M315.5 182.3L318.2 206.4M276.6 202.1L285.2 223.8M238.3 111.2L220.2 101.6M218.8 200.2L200.1 189.0M193.1 114.7L175.5 109.2M201.7 307.2L176.3 302.1M315.9 194.0L310.5 173.3M123.8 241.1L122.2 218.4M95.0 219.7L96.3 191.8M187.5 134.7L171.6 123.4M131.8 146.5L120.3 141.1M257.9 203.2L243.1 180.7M231.5 315.3L209.3 317.6M235.2 124.0L252.4 139.3M96.3 191.8L87.6 181.5M85.1 171.2L96.7 145.2M273.0 245.2L276.2 265.8M214.7 126.6L187.5 134.7M171.5 284.7L150.1 272.2M220.9 309.1L238.5 296.0M216.6 278.5L232.5 261.3M254.6 111.3L266.1 112.1M288.5 159.3L269.8 160.5M201.7 307.2L221.8 296.0M192.2 271.8L210.4 255.7M260.2 104.8L266.1 112.1M142.2 225.5L140.3 204.3M315.9 215.0L316.1 228.9M156.0 291.6L160.0 306.1M257.9 203.2L238.3 199.8M185.2 314.0L168.3 318.4M145.4 156.1L131.8 146.5M210.4 255.7L185.2 249.2M157.6 104.0L138.3 116.1M175.5 109.2L157.6 104.0M209.3 317.6L188.7 322.8M247.3 101.2L237.9 94.5M295.6 137.2L307.7 158.1M251.4 308.9L231.5 315.3M171.5 284.7L166.0 263.3M232.5 261.3L256.7 264.5M147.9 98.6L141.2 105.9M120.3 141.1L107.6 149.4M163.4 95.1L157.6 104.0M257.9 203.2L263.1 178.4M131.8 146.5L112.6 158.4M96.1 266.8L107.4 275.2M217.8 110.9L200.2 102.8M238.4 318.4L249.9 315.3M270.4 295.8L280.1 293.5M215.5 323.4L188.7 322.8M273.0 245.2L256.7 264.5M238.5 296.0L256.4 296.6M214.7 126.6L193.1 114.7M86.1 244.4L96.1 266.8M237.4 102.6L228.4 95.9M108.0 204.7L109.8 179.3M241.2 219.9L250.5 244.9M101.4 277.2L96.1 266.8M200.2 102.8L205.6 93.5M264.4 222.1L273.0 245.2M228.8 162.9L204.3 170.2M270.4 295.8L289.4 277.7M197.2 289.8L216.6 278.5M312.2 207.2L308.9 186.4M251.4 308.9L261.2 308.1M238.4 279.6L256.9 283.3M304.4 202.9L300.1 221.9M295.6 137.2L301.4 152.1M301.1 165.4L288.5 159.3M276.6 202.1L283.2 180.8M171.5 284.7L192.2 271.8M248.1 158.2L252.4 139.3M121.4 269.1L115.3 252.2M189.1 88.8L205.6 93.5M238.3 199.8L241.2 219.9M147.9 98.6L127.6 110.8M312.2 207.2L309.3 224.7M288.4 143.5L274.9 127.4M301.4 244.9L300.1 221.9M266.1 112.1L283.8 128.1M108.2 262.1L96.4 257.4M163.4 95.1L141.2 105.9M200.2 102.8L180.7 95.5M156.0 291.6L150.1 272.2M298.7 271.2L309.1 252.0M238.3 111.2L254.6 111.3M228.8 162.9L224.2 180.2M279.5 119.2L295.6 137.2M182.7 180.0L204.3 170.2M274.9 127.4L255.0 124.5M251.4 308.9L270.4 295.8M141.2 105.9L157.6 104.0M171.7 90.4L163.4 95.1M182.9 226.9L185.2 249.2M118.4 296.2L128.5 303.3M216.6 278.5L192.2 271.8M120.3 141.1L134.4 130.0M189.1 88.8L180.7 95.5M81.0 223.2L78.6 208.1M84.8 206.1L87.6 181.5M214.3 89.1L222.0 90.1M221.8 296.0L238.4 279.6M200.2 102.8L193.1 114.7M101.4 277.2L111.9 288.6M233.2 142.5L214.7 126.6M182.9 226.9L161.7 216.1M108.2 262.1L102.0 242.1M156.0 291.6L137.9 279.9M261.2 308.1L249.9 315.3M199.3 326.9L175.5 324.4M280.1 293.5L298.7 271.2M228.8 162.9L209.9 148.6M122.2 218.4L123.6 188.8M175.5 109.2L152.0 117.1M182.7 180.0L185.1 154.8M111.9 288.6L96.1 266.8M110.6 126.4L106.9 136.1M127.6 110.8L110.6 126.4M152.0 117.1L134.4 130.0M110.8 227.9L108.0 204.7M152.0 117.1L157.6 104.0M250.5 244.9L273.0 245.2M88.3 160.1L96.7 145.2M108.0 204.7L96.3 191.8M156.0 291.6L171.5 284.7M263.1 178.4L269.8 160.5M198.4 214.0L181.4 203.6M238.3 111.2L255.0 124.5M121.4 269.1L137.9 279.9M280.1 293.5L287.2 287.1M229.2 242.7L221.4 218.1M160.0 306.1L185.2 314.0M243.1 180.7L248.1 158.2M139.3 311.1L148.7 315.7M288.9 263.7L289.3 245.3M96.7 145.2L95.3 156.1M283.8 128.1L295.6 137.2M301.1 165.4L301.4 152.1M201.7 307.2L185.2 314.0M128.5 303.3L144.7 308.5M198.4 214.0L221.4 218.1M185.1 154.8L165.7 144.8M315.5 182.3L310.5 173.3M84.8 206.1L96.3 191.8M240.8 307.2L231.5 315.3M288.4 143.5L283.8 128.1M238.5 296.0L256.9 283.3M87.6 181.5L98.0 169.1M182.7 180.0L160.9 191.1M96.4 257.4L107.4 275.2M214.3 89.1L205.6 93.5M152.0 117.1L149.1 135.5M87.8 232.8L84.8 206.1M238.4 279.6L216.6 278.5M176.3 302.1L197.2 289.8M138.6 177.5L123.6 188.8M256.7 264.5L256.9 283.3M110.8 227.9L102.0 242.1M137.8 295.7L160.0 306.1M88.3 160.1L85.1 171.2M123.6 188.8L108.0 204.7M232.5 261.3L229.2 242.7M256.4 296.6L270.4 295.8M115.3 252.2L110.8 227.9M195.9 87.6L214.3 89.1M127.4 167.2L112.6 158.4M308.9 186.4L299.3 181.4M127.3 296.4L137.8 295.7M285.2 223.8L289.3 245.3M198.4 214.0L200.1 189.0M144.7 308.5L148.7 315.7M275.2 282.0L289.4 277.7M182.7 180.0L165.3 166.4M214.3 89.1L228.4 95.9M280.1 293.5L266.2 305.7M220.2 101.6L205.6 93.5M274.9 127.4L266.1 112.1M229.2 242.7L207.5 232.7M85.1 171.2L87.6 181.5M112.6 158.4L120.3 141.1M96.7 145.2L110.6 126.4M109.8 179.3L96.3 191.8M228.8 162.9L243.1 180.7M315.9 194.0L315.5 182.3M148.7 315.7L175.5 324.4M275.2 282.0L256.9 283.3M289.4 277.7L298.7 271.2M134.4 130.0L119.9 130.1M110.8 227.9L95.0 219.7M269.8 160.5L248.1 158.2M238.3 199.8L243.1 180.7M198.4 214.0L207.5 232.7M315.5 182.3L307.7 158.1M256.4 296.6L275.2 282.0M301.7 259.7L309.1 252.0M166.0 263.3L185.2 249.2M80.9 184.0L80.5 194.1M308.9 186.4L301.1 165.4M127.3 296.4L144.7 308.5M198.4 214.0L182.9 226.9M275.2 282.0L288.9 263.7M214.3 89.1L189.1 88.8M209.9 148.6L187.5 134.7M86.1 244.4L81.9 235.1M220.2 101.6L228.4 95.9M221.4 218.1L241.2 219.9M274.9 127.4L283.8 128.1M276.6 202.1L264.4 222.1M122.3 119.3L119.9 130.1M225.0 324.0L238.4 318.4M204.3 170.2L185.1 154.8M228.8 162.9L248.1 158.2M122.3 119.3L110.6 126.4M87.8 232.8L95.0 219.7M165.3 166.4L165.7 144.8M289.4 277.7L301.7 259.7M218.8 200.2L224.2 180.2M301.7 259.7L311.2 236.7M256.4 296.6L251.4 308.9M257.9 203.2L264.4 222.1M285.2 223.8L273.0 245.2M312.2 207.2L315.9 194.0M274.1 142.4L255.0 124.5M145.4 156.1L149.1 135.5M86.1 244.4L81.0 223.2M127.3 296.4L120.8 280.2M233.2 142.5L252.4 139.3M150.1 272.2L166.0 263.3M200.1 189.0L182.7 180.0M102.0 242.1L95.0 219.7M165.3 166.4L145.4 156.1M95.3 156.1L98.0 169.1M289.3 245.3L276.2 265.8M275.2 282.0L276.2 265.8M218.8 200.2L198.4 214.0M181.4 203.6L160.9 191.1M289.4 277.7L280.1 293.5M138.6 177.5L127.4 167.2M96.4 257.4L86.1 244.4M134.4 130.0L138.3 116.1M180.7 95.5L157.6 104.0M156.0 291.6L137.8 295.7M137.8 295.7L144.7 308.5M247.3 101.2L266.1 112.1M255.0 124.5L254.6 111.3M131.8 146.5L134.4 130.0M220.2 101.6L217.8 110.9M115.3 252.2L102.0 242.1M200.1 189.0L181.4 203.6" stroke="#000" stroke-width="0.8" stroke-opacity="0.92" fill="none"/>
 <circle cx="198.4" cy="207.2" r="119.8" fill="none" stroke="#111" stroke-width="0.9" stroke-opacity="0.45"/>
 <!-- triad -->
 <path d="M38.4 399.7 L38.4 379.7" stroke="#4c5ce8" stroke-width="1.8"/>
 <path d="M38.4 373 L38.4 368.2" stroke="#2030ff" stroke-width="1.1"/>
 <rect x="37" y="373.2" width="2.8" height="5.4" fill="none" stroke="#2030ff" stroke-width="0.8"/>
 <circle cx="38.4" cy="379.7" r="1.8" fill="#3040f0"/>
 <path d="M38.4 399.7 L20 391" stroke="#10d010" stroke-width="1"/>
 <path d="M12 387.4 L16 388.2 L22.5 390.8 L21 393.2 L15 390.2Z" fill="none" stroke="#10d010" stroke-width="0.8"/>
 <path d="M38.4 399.7 L55 392" stroke="#f01010" stroke-width="1"/>
 <path d="M65 387.1 L61 388.2 L54.5 390.8 L56 393.3 L62 390Z" fill="none" stroke="#f01010" stroke-width="0.8"/>
 <text x="37" y="360.5" font-family="Liberation Serif" font-size="9" fill="#f0f0f0">Z</text>
 <text x="5.7" y="382.8" font-family="Liberation Serif" font-size="9" fill="#f0f0f0">Y</text>
 <text x="68.1" y="382.8" font-family="Liberation Serif" font-size="9" fill="#f0f0f0">X</text>
</svg>
</div>
<div class="t" style="left:473.6px;top:18.84px;font-size:10px;font-weight:normal;color:#f0f0f0;transform:scaleX(0.92);transform-origin:0 0;">Model info :C:/Users/Desktop/ERP_Cover_MS.h3d</div>
<div class="t" style="left:1110.5px;top:3.88px;font-size:9px;font-weight:normal;color:#222;transform:translateX(-100%) scaleX(0.86);transform-origin:100% 0;">1 of 1</div>
<div class="t" style="left:925.3px;top:16.68px;font-size:9px;font-weight:normal;color:#222;transform:translateX(-50%);">Subcase 1 (frf) - Radiated Sound</div>
<div class="t" style="left:927px;top:27.14px;font-size:9.4px;font-weight:bold;color:#202020;transform:translateX(-50%);">Equivalent Radiated Power</div>
<div class="t" style="left:926.2px;top:39.17px;font-size:7px;font-weight:normal;color:#222;transform:translateX(-50%);">MAG | Panel</div>
<div class="t" style="left:915px;top:48.72px;font-size:7.3px;font-weight:normal;color:#222;transform:translateX(-50%);">C:/Users/Desktop/ERP_Cover_MS.h3d</div>
<svg class="r" style="left:0;top:0" width="1114" height="431" shape-rendering="crispEdges"><rect x="747" y="59" width="357" height="345" fill="#fff"/><path d="M777.5 60 V404" stroke="#d0d0d0" stroke-width="1" stroke-dasharray="1 2"/><rect x="806" y="59" width="1" height="345" fill="#c8c8c8"/><path d="M836.5 60 V404" stroke="#d0d0d0" stroke-width="1" stroke-dasharray="1 2"/><rect x="866" y="59" width="1" height="345" fill="#c8c8c8"/><path d="M896.5 60 V404" stroke="#d0d0d0" stroke-width="1" stroke-dasharray="1 2"/><rect x="925" y="59" width="1" height="345" fill="#c8c8c8"/><path d="M955.5 60 V404" stroke="#d0d0d0" stroke-width="1" stroke-dasharray="1 2"/><rect x="985" y="59" width="1" height="345" fill="#c8c8c8"/><path d="M1015.5 60 V404" stroke="#d0d0d0" stroke-width="1" stroke-dasharray="1 2"/><rect x="1044" y="59" width="1" height="345" fill="#c8c8c8"/><path d="M1074.5 60 V404" stroke="#d0d0d0" stroke-width="1" stroke-dasharray="1 2"/><path d="M749 380.5 H1104" stroke="#d0d0d0" stroke-width="1" stroke-dasharray="1 2"/><rect x="747" y="355" width="357" height="1" fill="#c8c8c8"/><path d="M749 331.5 H1104" stroke="#d0d0d0" stroke-width="1" stroke-dasharray="1 2"/><rect x="747" y="305" width="357" height="1" fill="#c8c8c8"/><path d="M749 281.5 H1104" stroke="#d0d0d0" stroke-width="1" stroke-dasharray="1 2"/><rect x="747" y="256" width="357" height="1" fill="#c8c8c8"/><path d="M749 232.5 H1104" stroke="#d0d0d0" stroke-width="1" stroke-dasharray="1 2"/><rect x="747" y="207" width="357" height="1" fill="#c8c8c8"/><path d="M749 183.5 H1104" stroke="#d0d0d0" stroke-width="1" stroke-dasharray="1 2"/><rect x="747" y="158" width="357" height="1" fill="#c8c8c8"/><path d="M749 133.5 H1104" stroke="#d0d0d0" stroke-width="1" stroke-dasharray="1 2"/><rect x="747" y="108" width="357" height="1" fill="#c8c8c8"/><path d="M749 84.5 H1104" stroke="#d0d0d0" stroke-width="1" stroke-dasharray="1 2"/><rect x="927" y="64" width="175" height="18" fill="#fff"/><rect x="927" y="64" width="174" height="1" fill="#505050"/><rect x="927" y="81" width="175" height="1" fill="#505050"/><rect x="927" y="64" width="1" height="18" fill="#505050"/><rect x="1101" y="64" width="1" height="18" fill="#505050"/><rect x="1102" y="65" width="1" height="17" fill="#b0b0b0"/><rect x="931" y="72" width="34" height="2" fill="#1010ff"/></svg>
<svg class="r" style="left:0;top:0" width="1114" height="431"><path d="M771.0 354.7 L771.6 353.8 L772.2 352.9 L772.8 352.0 L773.4 351.1 L774.0 350.2 L774.6 349.2 L775.2 348.3 L775.8 347.3 L776.4 346.4 L777.0 345.4 L777.5 344.4 L778.1 343.4 L778.7 342.4 L779.3 341.4 L779.9 340.3 L780.5 339.3 L781.1 338.3 L781.7 337.2 L782.3 336.1 L782.9 335.0 L783.5 333.9 L784.1 332.8 L784.7 331.7 L785.3 330.6 L785.9 329.5 L786.5 328.3 L787.1 327.2 L787.7 326.0 L788.3 324.9 L788.9 323.7 L789.4 322.5 L790.0 321.3 L790.6 320.1 L791.2 318.9 L791.8 317.6 L792.4 316.4 L793.0 315.2 L793.6 313.9 L794.2 312.7 L794.8 311.4 L795.4 310.1 L796.0 308.8 L796.6 307.5 L797.2 306.2 L797.8 304.9 L798.4 303.6 L799.0 302.2 L799.6 300.9 L800.2 299.5 L800.8 298.2 L801.3 296.8 L801.9 295.4 L802.5 294.0 L803.1 292.6 L803.7 291.2 L804.3 289.8 L804.9 288.3 L805.5 286.9 L806.1 285.4 L806.7 283.9 L807.3 282.5 L807.9 281.0 L808.5 279.5 L809.1 278.0 L809.7 276.5 L810.3 275.0 L810.9 273.5 L811.5 272.0 L812.1 270.4 L812.7 268.8 L813.2 267.2 L813.8 265.6 L814.4 264.0 L815.0 262.4 L815.6 260.7 L816.2 259.0 L816.8 257.3 L817.4 255.6 L818.0 253.9 L818.6 252.2 L819.2 250.4 L819.8 248.6 L820.4 246.8 L821.0 244.9 L821.6 243.1 L822.2 241.2 L822.8 239.3 L823.4 237.3 L824.0 235.4 L824.6 233.4 L825.1 231.3 L825.7 229.3 L826.3 227.2 L826.9 225.0 L827.5 222.9 L828.1 220.7 L828.7 218.4 L829.3 216.1 L829.9 213.8 L830.5 211.5 L831.1 209.0 L831.7 206.6 L832.3 204.0 L832.9 201.5 L833.5 198.8 L834.1 196.2 L834.7 193.4 L835.3 190.6 L835.9 187.7 L836.5 184.7 L837.0 181.7 L837.6 178.5 L838.2 175.3 L838.8 172.0 L839.4 168.6 L840.0 165.1 L840.6 161.5 L841.2 157.7 L841.8 153.8 L842.4 149.8 L843.0 145.7 L843.6 141.4 L844.2 137.0 L844.8 132.3 L845.4 127.6 L846.0 122.6 L846.6 117.5 L847.2 112.3 L847.8 106.9 L848.4 101.3 L848.9 95.8 L849.5 90.2 L850.1 84.7 L850.7 79.5 L851.3 74.7 L851.9 70.6 L852.5 67.5 L853.1 65.4 L853.7 64.7 L854.3 65.4 L854.9 67.3 L855.5 70.3 L856.1 74.3 L856.7 78.8 L857.3 83.7 L857.9 88.9 L858.5 94.1 L859.1 99.4 L859.7 104.5 L860.2 109.6 L860.8 114.5 L861.4 119.2 L862.0 123.8 L862.6 128.2 L863.2 132.4 L863.8 136.5 L864.4 140.4 L865.0 144.1 L865.6 147.8 L866.2 151.3 L866.8 154.7 L867.4 157.9 L868.0 161.1 L868.6 164.1 L869.2 167.0 L869.8 169.9 L870.4 172.6 L871.0 175.3 L871.6 177.9 L872.2 180.4 L872.7 182.9 L873.3 185.3 L873.9 187.6 L874.5 189.8 L875.1 192.0 L875.7 194.1 L876.3 196.2 L876.9 198.3 L877.5 200.3 L878.1 202.2 L878.7 204.1 L879.3 205.9 L879.9 207.7 L880.5 209.5 L881.1 211.2 L881.7 212.9 L882.3 214.6 L882.9 216.2 L883.5 217.8 L884.1 219.4 L884.6 220.9 L885.2 222.4 L885.8 223.8 L886.4 225.3 L887.0 226.7 L887.6 228.1 L888.2 229.4 L888.8 230.7 L889.4 232.0 L890.0 233.3 L890.6 234.5 L891.2 235.8 L891.8 237.0 L892.4 238.1 L893.0 239.3 L893.6 240.4 L894.2 241.5 L894.8 242.6 L895.4 243.7 L896.0 244.7 L896.5 245.7 L897.1 246.7 L897.7 247.7 L898.3 248.6 L898.9 249.5 L899.5 250.4 L900.1 251.3 L900.7 252.1 L901.3 253.0 L901.9 253.7 L902.5 254.5 L903.1 255.3 L903.7 256.0 L904.3 256.7 L904.9 257.3 L905.5 257.9 L906.1 258.5 L906.7 259.1 L907.3 259.6 L907.9 260.1 L908.4 260.6 L909.0 261.0 L909.6 261.3 L910.2 261.7 L910.8 261.9 L911.4 262.2 L912.0 262.3 L912.6 262.5 L913.2 262.5 L913.8 262.5 L914.4 262.4 L915.0 262.2 L915.6 262.0 L916.2 261.7 L916.8 261.3 L917.4 260.8 L918.0 260.1 L918.6 259.4 L919.2 258.6 L919.8 257.7 L920.3 256.7 L920.9 255.7 L921.5 254.5 L922.1 253.4 L922.7 252.2 L923.3 251.2 L923.9 250.2 L924.5 249.4 L925.1 248.8 L925.7 248.5 L926.3 248.6 L926.9 249.0 L927.5 249.7 L928.1 250.8 L928.7 252.1 L929.3 253.7 L929.9 255.5 L930.5 257.3 L931.1 259.2 L931.7 261.1 L932.2 262.9 L932.8 264.7 L933.4 266.4 L934.0 267.9 L934.6 269.4 L935.2 270.8 L935.8 272.1 L936.4 273.3 L937.0 274.3 L937.6 275.3 L938.2 276.2 L938.8 277.0 L939.4 277.7 L940.0 278.4 L940.6 278.9 L941.2 279.5 L941.8 279.9 L942.4 280.3 L943.0 280.7 L943.6 281.0 L944.1 281.2 L944.7 281.4 L945.3 281.6 L945.9 281.7 L946.5 281.8 L947.1 281.9 L947.7 281.9 L948.3 281.8 L948.9 281.8 L949.5 281.7 L950.1 281.6 L950.7 281.4 L951.3 281.3 L951.9 281.1 L952.5 280.8 L953.1 280.6 L953.7 280.3 L954.3 279.9 L954.9 279.6 L955.5 279.2 L956.0 278.8 L956.6 278.4 L957.2 277.9 L957.8 277.4 L958.4 276.9 L959.0 276.3 L959.6 275.8 L960.2 275.1 L960.8 274.5 L961.4 273.8 L962.0 273.1 L962.6 272.4 L963.2 271.6 L963.8 270.8 L964.4 270.0 L965.0 269.1 L965.6 268.2 L966.2 267.2 L966.8 266.2 L967.4 265.2 L967.9 264.1 L968.5 263.0 L969.1 261.9 L969.7 260.6 L970.3 259.4 L970.9 258.1 L971.5 256.7 L972.1 255.3 L972.7 253.9 L973.3 252.4 L973.9 250.8 L974.5 249.2 L975.1 247.5 L975.7 245.8 L976.3 243.9 L976.9 242.1 L977.5 240.1 L978.1 238.1 L978.7 236.0 L979.2 233.8 L979.8 231.5 L980.4 229.2 L981.0 226.8 L981.6 224.2 L982.2 221.6 L982.8 218.9 L983.4 216.1 L984.0 213.3 L984.6 210.3 L985.2 207.2 L985.8 204.1 L986.4 200.8 L987.0 197.5 L987.6 194.2 L988.2 190.7 L988.8 187.3 L989.4 183.8 L990.0 180.3 L990.6 176.9 L991.2 173.5 L991.7 170.3 L992.3 167.2 L992.9 164.4 L993.5 161.8 L994.1 159.6 L994.7 157.6 L995.3 156.1 L995.9 155.0 L996.5 154.3 L997.1 154.0 L997.7 154.0 L998.3 154.4 L998.9 155.0 L999.5 155.8 L1000.1 156.7 L1000.7 157.8 L1001.3 158.9 L1001.9 160.0 L1002.5 161.0 L1003.1 162.0 L1003.6 162.9 L1004.2 163.7 L1004.8 164.3 L1005.4 164.7 L1006.0 165.1 L1006.6 165.2 L1007.2 165.1 L1007.8 164.9 L1008.4 164.5 L1009.0 164.0 L1009.6 163.2 L1010.2 162.3 L1010.8 161.2 L1011.4 160.0 L1012.0 158.6 L1012.6 157.1 L1013.2 155.4 L1013.8 153.7 L1014.4 152.0 L1015.0 150.1 L1015.5 148.3 L1016.1 146.6 L1016.7 144.9 L1017.3 143.3 L1017.9 141.9 L1018.5 140.8 L1019.1 139.9 L1019.7 139.3 L1020.3 139.2 L1020.9 139.3 L1021.5 139.9 L1022.1 140.9 L1022.7 142.2 L1023.3 143.9 L1023.9 145.9 L1024.5 148.1 L1025.1 150.6 L1025.7 153.2 L1026.3 156.0 L1026.8 158.8 L1027.4 161.7 L1028.0 164.7 L1028.6 167.7 L1029.2 170.6 L1029.8 173.5 L1030.4 176.4 L1031.0 179.2 L1031.6 182.0 L1032.2 184.7 L1032.8 187.3 L1033.4 189.9 L1034.0 192.4 L1034.6 194.8 L1035.2 197.2 L1035.8 199.4 L1036.4 201.7 L1037.0 203.8 L1037.6 205.9 L1038.2 207.9 L1038.8 209.9 L1039.3 211.8 L1039.9 213.6 L1040.5 215.4 L1041.1 217.1 L1041.7 218.8 L1042.3 220.4 L1042.9 222.0 L1043.5 223.5 L1044.1 225.0 L1044.7 226.4 L1045.3 227.8 L1045.9 229.1 L1046.5 230.4 L1047.1 231.7 L1047.7 233.0 L1048.3 234.2 L1048.9 235.3 L1049.5 236.5 L1050.1 237.6 L1050.7 238.6 L1051.2 239.7 L1051.8 240.7 L1052.4 241.7 L1053.0 242.7 L1053.6 243.6 L1054.2 244.5 L1054.8 245.4 L1055.4 246.3 L1056.0 247.1 L1056.6 248.0 L1057.2 248.8 L1057.8 249.5 L1058.4 250.3 L1059.0 251.1 L1059.6 251.8 L1060.2 252.5 L1060.8 253.2 L1061.4 253.9 L1062.0 254.5 L1062.5 255.2 L1063.1 255.8 L1063.7 256.4 L1064.3 257.0 L1064.9 257.6 L1065.5 258.2 L1066.1 258.8 L1066.7 259.3 L1067.3 259.9 L1067.9 260.4 L1068.5 260.9 L1069.1 261.4 L1069.7 261.9 L1070.3 262.4 L1070.9 262.9 L1071.5 263.3 L1072.1 263.8 L1072.7 264.3 L1073.3 264.7 L1073.9 265.1 L1074.5 265.5 L1075.0 266.0 L1075.6 266.4 L1076.2 266.8 L1076.8 267.2 L1077.4 267.5 L1078.0 267.9 L1078.6 268.3 L1079.2 268.6 L1079.8 269.0 L1080.4 269.3 L1081.0 269.7 L1081.6 270.0 L1082.2 270.4 L1082.8 270.7 L1083.4 271.0 L1084.0 271.3 L1084.6 271.6 L1085.2 271.9 L1085.8 272.2 L1086.3 272.5 L1086.9 272.8 L1087.5 273.1 L1088.1 273.4 L1088.7 273.6 L1089.3 273.9 L1089.9 274.2 L1090.5 274.4 L1091.1 274.7 L1091.7 274.9 L1092.3 275.2 L1092.9 275.4 L1093.5 275.7 L1094.1 275.9 L1094.7 276.1 L1095.3 276.4 L1095.9 276.6 L1096.5 276.8 L1097.1 277.0 L1097.7 277.2 L1098.2 277.5 L1098.8 277.7 L1099.4 277.9 L1100.0 278.1 L1100.6 278.3 L1101.2 278.5 L1101.8 278.7 L1102.4 278.9 L1103.0 279.0 L1103.6 279.2 L1104.2 279.4" stroke="#1414ff" stroke-width="1.65" fill="none" stroke-linejoin="round"/><path d="M853.6 65 L852.9 404" stroke="#c80000" stroke-width="1.9"/><defs><filter id="bl" x="-20%" y="-50%" width="140%" height="200%"><feGaussianBlur stdDeviation="2.3"/></filter></defs><rect x="978" y="101" width="121" height="35" fill="#202020" filter="url(#bl)" opacity="0.8"/></svg>
<svg class="r" style="left:0;top:0" width="1114" height="431" shape-rendering="crispEdges"><rect x="974" y="97" width="121" height="35" fill="#000"/><rect x="976" y="99" width="117" height="31" fill="#ffff00"/><rect x="747" y="59" width="1" height="346" fill="#6a6a6a"/><rect x="747" y="404" width="358" height="1" fill="#606060"/><rect x="1104" y="59" width="1" height="346" fill="#6a6a6a"/><rect x="747" y="59" width="358" height="1" fill="#6a6a6a"/><rect x="747" y="404" width="1" height="3" fill="#505050"/><rect x="806" y="404" width="1" height="3" fill="#505050"/><rect x="866" y="404" width="1" height="3" fill="#505050"/><rect x="925" y="404" width="1" height="3" fill="#505050"/><rect x="985" y="404" width="1" height="3" fill="#505050"/><rect x="1044" y="404" width="1" height="3" fill="#505050"/><rect x="1104" y="404" width="1" height="3" fill="#505050"/><rect x="745" y="404" width="2" height="1" fill="#505050"/><rect x="745" y="355" width="2" height="1" fill="#505050"/><rect x="745" y="305" width="2" height="1" fill="#505050"/><rect x="745" y="256" width="2" height="1" fill="#505050"/><rect x="745" y="207" width="2" height="1" fill="#505050"/><rect x="745" y="158" width="2" height="1" fill="#505050"/><rect x="745" y="108" width="2" height="1" fill="#505050"/><rect x="745" y="59" width="2" height="1" fill="#505050"/></svg>
<div class="t" style="left:994.7px;top:105.76px;font-size:16px;font-weight:bold;color:#202020;">Response</div>
<div class="t" style="left:966.4px;top:69.53px;font-size:8px;font-weight:normal;color:#0000ff;transform:scaleX(0.935);transform-origin:0 0;">Equivalent Radiated Power @ PANELG</div>
<div class="t" style="left:746.7px;top:407.60px;font-size:8.5px;font-weight:normal;color:#333;transform:translateX(-50%) scaleX(0.93);">100</div>
<div class="t" style="left:806.2px;top:407.60px;font-size:8.5px;font-weight:normal;color:#333;transform:translateX(-50%) scaleX(0.93);">150</div>
<div class="t" style="left:865.7px;top:407.60px;font-size:8.5px;font-weight:normal;color:#333;transform:translateX(-50%) scaleX(0.93);">200</div>
<div class="t" style="left:925.2px;top:407.60px;font-size:8.5px;font-weight:normal;color:#333;transform:translateX(-50%) scaleX(0.93);">250</div>
<div class="t" style="left:984.7px;top:407.60px;font-size:8.5px;font-weight:normal;color:#333;transform:translateX(-50%) scaleX(0.93);">300</div>
<div class="t" style="left:1044.2px;top:407.60px;font-size:8.5px;font-weight:normal;color:#333;transform:translateX(-50%) scaleX(0.93);">350</div>
<div class="t" style="left:1103.7px;top:407.60px;font-size:8.5px;font-weight:normal;color:#333;transform:translateX(-50%) scaleX(0.93);">400</div>
<div class="t" style="left:743.8px;top:400.60px;font-size:8.5px;font-weight:normal;color:#333;transform:translateX(-100%) scaleX(0.93);transform-origin:100% 0;">95</div>
<div class="t" style="left:743.8px;top:351.31px;font-size:8.5px;font-weight:normal;color:#333;transform:translateX(-100%) scaleX(0.93);transform-origin:100% 0;">100</div>
<div class="t" style="left:743.8px;top:302.03px;font-size:8.5px;font-weight:normal;color:#333;transform:translateX(-100%) scaleX(0.93);transform-origin:100% 0;">105</div>
<div class="t" style="left:743.8px;top:252.74px;font-size:8.5px;font-weight:normal;color:#333;transform:translateX(-100%) scaleX(0.93);transform-origin:100% 0;">110</div>
<div class="t" style="left:743.8px;top:203.46px;font-size:8.5px;font-weight:normal;color:#333;transform:translateX(-100%) scaleX(0.93);transform-origin:100% 0;">115</div>
<div class="t" style="left:743.8px;top:154.17px;font-size:8.5px;font-weight:normal;color:#333;transform:translateX(-100%) scaleX(0.93);transform-origin:100% 0;">120</div>
<div class="t" style="left:743.8px;top:104.89px;font-size:8.5px;font-weight:normal;color:#333;transform:translateX(-100%) scaleX(0.93);transform-origin:100% 0;">125</div>
<div class="t" style="left:743.8px;top:55.60px;font-size:8.5px;font-weight:normal;color:#333;transform:translateX(-100%) scaleX(0.93);transform-origin:100% 0;">130</div>
<div class="t" style="left:925.6px;top:416.98px;font-size:9px;font-weight:normal;color:#222;transform:translateX(-50%);">Frequency</div>
<div class="t" style="left:725px;top:231.5px;font-size:10px;color:#222;transform:translate(-50%,-50%) rotate(-90deg) scaleX(0.89);line-height:10px">Equivalent Radiated Power (Scale=dB10(A) Ref=1e-12)</div>
</body></html>
